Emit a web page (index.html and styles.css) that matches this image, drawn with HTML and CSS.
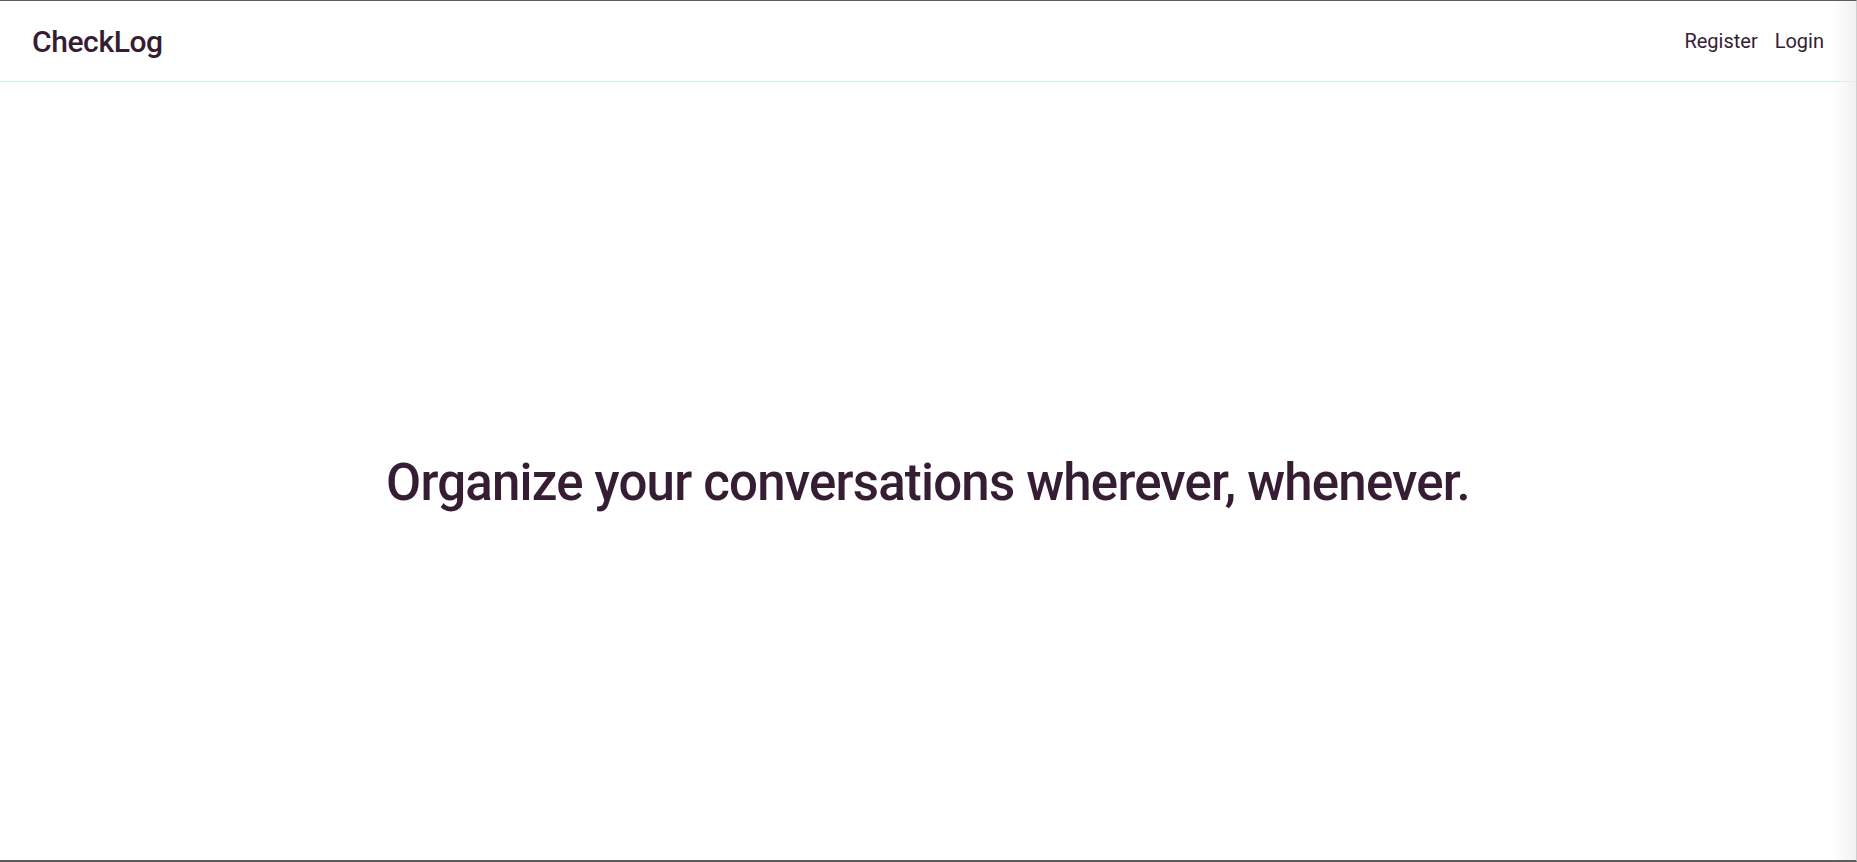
FILE: index.html
```html
<!DOCTYPE html>
<html lang="en">
<head>
<meta charset="utf-8">
<title>CheckLog</title>
<link rel="stylesheet" href="styles.css">
</head>
<body>
<div class="frame">
  <header class="topbar">
    <a class="brand" href="#">CheckLog</a>
    <nav class="nav">
      <a class="nav-link" href="#">Register</a>
      <a class="nav-link" href="#">Login</a>
    </nav>
  </header>
  <main class="hero">
    <h1 class="hero-title">Organize your conversations wherever, whenever.</h1>
  </main>
  <div class="edge-shade"></div>
</div>
</body>
</html>
```
FILE: styles.css
```css
html, body {
  margin: 0;
  padding: 0;
  height: 100%;
  background: #ffffff;
}

body {
  font-family: Roboto, "Liberation Sans", Arial, sans-serif;
  color: #351d33;
}

.frame {
  position: relative;
  height: 100vh;
  box-sizing: border-box;
  border-top: 1px solid #5c5c5c;
  border-bottom: 2px solid #5c5c5c;
  border-right: 1px solid #cfcfcf;
  display: flex;
  flex-direction: column;
  overflow: hidden;
}

.topbar {
  height: 80px;
  flex: none;
  border-bottom: 1px solid #c3ece5;
  display: flex;
  align-items: center;
  justify-content: space-between;
  padding: 0 32px 0 32px;
}

.brand {
  font-size: 30px;
  font-weight: 500;
  color: #351d33;
  text-decoration: none;
  letter-spacing: -0.4px;
}

.nav {
  display: flex;
  gap: 17px;
  align-items: center;
}

.nav-link {
  font-size: 20px;
  font-weight: 400;
  color: #351d33;
  text-decoration: none;
}

.hero {
  flex: 1;
  display: flex;
  align-items: center;
  justify-content: center;
  padding-top: 22px;
}

.hero-title {
  margin: 0;
  font-size: 51px;
  font-weight: 500;
  letter-spacing: -0.8px;
  color: #351d33;
  text-align: center;
}

.edge-shade {
  position: absolute;
  top: 0;
  right: 0;
  bottom: 0;
  width: 24px;
  background: linear-gradient(to right, rgba(240, 240, 240, 0), rgba(240, 240, 240, 0.9));
  pointer-events: none;
}
```
